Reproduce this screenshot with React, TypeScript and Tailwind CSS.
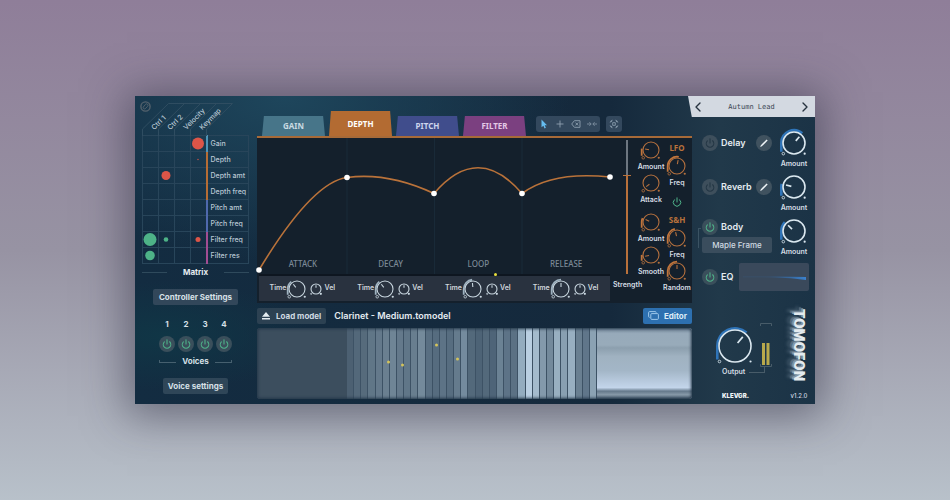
import React, { useState } from "react";
import { ChevronLeft, ChevronRight, Power } from "lucide-react";

type Tone = "light" | "orange" | "blue";

const TABS = [
  { name: "GAIN", color: "h-5 bg-[#477589] text-[#c9dbe2]" },
  { name: "DEPTH", color: "h-[25px] bg-[#b36b32] text-white" },
  { name: "PITCH", color: "h-5 bg-[#404d8c] text-[#cdd5ee]" },
  { name: "FILTER", color: "h-5 bg-[#7b4080] text-[#e3c9e6]" },
];

const SOURCES = ["Ctrl 1", "Ctrl 2", "Velocity", "Keymap"];

// dot radius for each source, negative amounts are red
const TARGETS = [
  { name: "Gain", edge: "border-l-[#4d94b8]", amounts: [0, 0, 0, -6] },
  { name: "Depth", edge: "border-l-[#b56d35]", amounts: [0, 0, 0, -0.7] },
  { name: "Depth amt", edge: "border-l-[#b56d35]", amounts: [0, -4.5, 0, 0] },
  { name: "Depth freq", edge: "border-l-[#b56d35]", amounts: [0, 0, 0, 0] },
  { name: "Pitch amt", edge: "border-l-[#4f69ad]", amounts: [0, 0, 0, 0] },
  { name: "Pitch freq", edge: "border-l-[#4f69ad]", amounts: [0, 0, 0, 0] },
  { name: "Filter freq", edge: "border-l-[#a14d93]", amounts: [6.5, 2.3, 0, -2.5] },
  { name: "Filter res", edge: "border-l-[#a14d93]", amounts: [4.8, 0, 0, 0] },
];

const STAGES = [
  { name: "ATTACK", time: 0.36 },
  { name: "DECAY", time: 0.36 },
  { name: "LOOP", time: 0.48 },
  { name: "RELEASE", time: 0.5 },
];

const WAVES = [
  "#4c6072", "#53687a", "#566b7c", "#607687", "#64798b", "#6a7f90", "#6f8596", "#64798b", "#607688",
  "#687e8f", "#748a9b", "#596f82", "#566c7f", "#5d7386", "#576d80", "#657b8d", "#748b9e", "#53697b",
  "#4d6376", "#53697b", "#4e6478", "#6b8294", "#5d7387", "#5b7184", "#93acbf", "#b9cfe2", "#a4bbcd",
  "#8399ab", "#73899b", "#98afc0", "#889fb1", "#98afc1", "#697f91", "#60768a", "#8ba2b3",
];

const TONES = {
  light: { ring: "#c8d6df", arc: "#9fb3c1" },
  orange: { ring: "#b4703e", arc: "#c0753c" },
  blue: { ring: "#dbe8f0", arc: "#2f74b8" },
};

function Knob({ name, r, start, tone }: { name: string; r: number; start: number; tone: Tone }) {
  const [value, setValue] = useState(start);
  const half = r + (r > 8 ? 4 : 3);
  const out = r + (r > 8 ? 1.7 : 1.3);
  const angle = ((value * 270 - 135) * Math.PI) / 180;
  const sin = Math.sin(angle);
  const cos = Math.cos(angle);
  const dot = r * 0.97;
  const { ring, arc } = TONES[tone];

  return (
    <span className="relative block shrink-0">
      <svg width={half * 2} height={half * 2} viewBox={`${-half} ${-half} ${half * 2} ${half * 2}`} fill="none">
        {r > 5 && value > 0.1 && (
          <path
            d={`M${-out} ${dot - 2} V0 A${out} ${out} 0 0 1 ${out * sin} ${-out * cos}`}
            stroke={arc}
            strokeWidth={r > 8 ? 2.6 : 1.8}
          />
        )}
        <circle r={r} stroke={ring} strokeWidth={r > 8 ? 1.6 : 1.1} />
        <path
          d={`M${r * 0.25 * sin} ${-r * 0.25 * cos} L${r * 0.75 * sin} ${-r * 0.75 * cos}`}
          stroke={ring}
          strokeWidth={r > 8 ? 1.7 : 1.1}
        />
        <circle cx={-dot} cy={dot} r={r > 5 ? 1.3 : 0.6} stroke={ring} strokeWidth="0.8" />
        <circle cx={dot} cy={dot} r="1.1" fill={ring} />
      </svg>
      <input
        type="range"
        aria-label={name}
        min={0}
        max={1}
        step={0.01}
        value={value}
        onChange={(e) => setValue(Number(e.target.value))}
        className="absolute inset-0 h-full w-full cursor-pointer opacity-0"
      />
    </span>
  );
}

function LabelKnob({ name, label, r, start, tone }: { name: string; label: string; r: number; start: number; tone: Tone }) {
  return (
    <div className="flex flex-col items-center gap-px">
      <Knob name={name} r={r} start={start} tone={tone} />
      <span className="text-[7px] leading-[10px] font-semibold text-[#d5dde4]">{label}</span>
    </div>
  );
}

function PowerButton({ name, on }: { name: string; on: boolean }) {
  const [active, setActive] = useState(on);

  return (
    <button
      aria-label={name}
      aria-pressed={active}
      onClick={() => setActive(!active)}
      className={
        active
          ? "flex size-4 shrink-0 items-center justify-center rounded-full bg-[#3a4f5b] text-[#4fb38a]"
          : "flex size-4 shrink-0 items-center justify-center rounded-full bg-[#3e4f5c] text-[#233644]"
      }
    >
      <Power size={10} strokeWidth={2.6} />
    </button>
  );
}

function Matrix() {
  return (
    <div className="relative ml-[7px] w-[107px]">
      <svg className="absolute top-0 left-0" width="107" height="40" viewBox="0 0 107 40" fill="none" stroke="#2f4d61" strokeWidth="1">
        {[0.5, 16.5, 32.5, 48.5, 64.5].map((x) => (
          <path key={x} d={`M${x} 40 V33 L${x + 26} 7.5`} />
        ))}
        <path d="M26.5 7.5 H90.5" />
      </svg>
      <svg className="absolute top-[5px] -left-[2px]" width="11" height="11" viewBox="0 0 11 11" fill="none" stroke="#53616c">
        <circle cx="5.5" cy="5.5" r="4.6" strokeWidth="1.4" />
        <path d="M3.2 6.2 a1.4 1.4 0 0 0 2 1.6 L7.6 5.3 a1.4 1.4 0 0 0 -2 -2 Z" strokeWidth="1" />
      </svg>
      <table className="w-full table-fixed border-collapse">
        <thead>
          <tr className="h-[39px]">
            {SOURCES.map((source) => (
              <th key={source} className="w-4 p-0 align-bottom">
                <div className="relative h-[39px]">
                  <span className="absolute bottom-1 left-3 origin-bottom-left -rotate-45 text-[7px] leading-[7px] font-medium whitespace-nowrap text-[#b9c7d3]">
                    {source}
                  </span>
                </div>
              </th>
            ))}
            <td className="p-0" />
          </tr>
        </thead>
        <tbody>
          {TARGETS.map((target) => (
            <tr key={target.name} className="h-4">
              {target.amounts.map((amount, i) => (
                <td key={i} className="h-4 border border-[#28455a] p-0">
                  {amount !== 0 && (
                    <svg className="-m-px block overflow-visible" width="16" height="15" viewBox="-8 -7.5 16 15">
                      <circle r={Math.abs(amount)} fill={amount > 0 ? "#4db287" : "#dc5548"} />
                    </svg>
                  )}
                </td>
              ))}
              <th
                className={`border border-l-2 border-[#28455a] p-0 pl-[3px] text-left text-[7px] leading-[8px] font-medium whitespace-nowrap text-[#b9c7d3] ${target.edge}`}
              >
                {target.name}
              </th>
            </tr>
          ))}
        </tbody>
      </table>
      <div className="mt-[3px] flex items-center gap-4">
        <span className="h-px flex-1 bg-[#2f4a5c]" />
        <h2 className="text-[8px] leading-[10px] font-bold text-[#e4ebf0]">Matrix</h2>
        <span className="h-px flex-1 bg-[#2f4a5c]" />
      </div>
    </div>
  );
}

function LeftColumn() {
  return (
    <aside className="flex flex-col items-stretch pr-px">
      <Matrix />
      <button className="mx-auto mt-3 h-4 rounded-[2px] bg-[#32475a] px-[6px] text-[8px] font-bold whitespace-nowrap text-[#d7e0e7]">
        Controller Settings
      </button>
      <div className="mx-auto mt-[14px] grid grid-cols-4 gap-x-[3px] gap-y-[7px]">
        {[1, 2, 3, 4].map((n) => (
          <span key={n} className="text-center text-[8px] leading-[10px] font-bold text-[#d7e0e7]">
            {n}
          </span>
        ))}
        {[1, 2, 3, 4].map((n) => (
          <PowerButton key={n} name={`Voice ${n}`} on />
        ))}
      </div>
      <div className="mx-auto mt-1 flex w-[73px] items-center gap-[6px]">
        <span className="h-[3px] flex-1 border-b border-l border-[#46606f]" />
        <h2 className="text-[8px] leading-[10px] font-bold text-[#d7e0e7]">Voices</h2>
        <span className="h-[3px] flex-1 border-r border-b border-[#46606f]" />
      </div>
      <button className="mx-auto mt-3 h-4 rounded-[2px] bg-[#2f4658] px-[5px] text-[8px] font-bold whitespace-nowrap text-[#d7e0e7]">
        Voice settings
      </button>
    </aside>
  );
}

function TabBar() {
  const toolClass = "flex h-4 flex-1 items-center justify-center";

  return (
    <div className="flex h-10 items-end pl-[5px]">
      <div className="flex items-end gap-1" role="tablist">
        {TABS.map((tab) => (
          <button
            key={tab.name}
            role="tab"
            aria-selected={tab.name === "DEPTH"}
            className={`w-[63px] [clip-path:polygon(3%_0,97%_0,100%_100%,0_100%)] font-['Noto_Sans',sans-serif] text-[8px] font-bold ${tab.color}`}
          >
            {tab.name}
          </button>
        ))}
      </div>
      <div className="mb-1 ml-[10px] flex w-16 rounded-[3px] bg-[#33485d]">
        <button aria-label="Select" className={toolClass}>
          <svg width="8" height="10" viewBox="0 0 8 10">
            <path d="M1.5 0.5 L7 6.2 H4.7 L5.9 8.8 L4.6 9.4 L3.4 6.8 L1.5 8.3 Z" fill="#66bdf0" />
          </svg>
        </button>
        <button aria-label="Add" className={toolClass}>
          <svg width="8" height="8" viewBox="0 0 8 8" stroke="#8fa0b0" strokeWidth="0.9">
            <path d="M4 0.5 V7.5 M0.5 4 H7.5" />
          </svg>
        </button>
        <button aria-label="Delete" className={toolClass}>
          <svg width="10" height="8" viewBox="0 0 10 8" fill="none" stroke="#8fa0b0" strokeWidth="0.9">
            <path d="M3.4 0.7 H9 V7.3 H3.4 L0.7 4 Z M4.5 2.6 L7.2 5.4 M7.2 2.6 L4.5 5.4" />
          </svg>
        </button>
        <button aria-label="Split" className={toolClass}>
          <svg width="10" height="8" viewBox="0 0 10 8" fill="none" stroke="#7f91a2" strokeWidth="0.9">
            <path d="M0 4 H4 M6 4 H10 M2.4 2.2 L4.2 4 L2.4 5.8 M7.6 2.2 L5.8 4 L7.6 5.8" />
          </svg>
        </button>
      </div>
      <button aria-label="Fit view" className="mb-1 ml-[6px] flex size-4 items-center justify-center rounded-[3px] bg-[#33485d]">
        <svg width="10" height="10" viewBox="0 0 10 10" fill="none" stroke="#8497a8" strokeWidth="0.9">
          <circle cx="5" cy="5" r="1.5" />
          <path d="M1.2 3.6 Q1.4 1.4 3.6 1.2 M6.4 1.2 Q8.6 1.4 8.8 3.6 M8.8 6.4 Q8.6 8.6 6.4 8.8 M3.6 8.8 Q1.4 8.6 1.2 6.4" />
          <path d="M2 2 L3.4 3.4 M8 2 L6.6 3.4 M8 8 L6.6 6.6 M2 8 L3.4 6.6" />
        </svg>
      </button>
    </div>
  );
}

function Envelope() {
  const points = [
    [2, 132],
    [90, 39.5],
    [177, 55.5],
    [265, 55.5],
    [353, 39],
  ];

  return (
    <div className="flex min-w-0 flex-1 flex-col">
      <div className="relative">
        <svg className="block w-full overflow-visible" viewBox="0 0 353 136" fill="none">
          <path d="M90 0 V136 M177.5 0 V136 M265 0 V136" stroke="#192a38" />
          <path
            d="M2 132 Q55 44 90 39.5 Q131 34 177 55.5 Q221 4 265 55.5 Q295 33 353 39"
            stroke="#b9723a"
            strokeWidth="1.6"
          />
          {points.map(([x, y]) => (
            <circle key={x} cx={x} cy={y} r="2.8" fill="#fff" />
          ))}
        </svg>
        <div className="absolute inset-x-0 bottom-[5px] grid grid-cols-4 pl-[2px] text-center font-['Noto_Sans',sans-serif] text-[8px] leading-[10px] font-medium text-[#7b8996]">
          {STAGES.map((stage) => (
            <span key={stage.name}>{stage.name}</span>
          ))}
        </div>
        <span className="absolute bottom-[-2px] left-[67%] size-[3px] rounded-full bg-[#e8de3c]" />
      </div>
      <div className="ml-[2px] grid h-[27px] grid-cols-4 border-t-2 border-[#0e1620] bg-[#29323f]">
        {STAGES.map((stage) => (
          <div key={stage.name} className="flex items-center justify-center pr-px text-[7px] font-semibold text-[#cfd6dc]">
            <span>Time</span>
            <Knob name={`${stage.name} time`} r={8} start={stage.time} tone="light" />
            <Knob name={`${stage.name} velocity`} r={5} start={0.5} tone="light" />
            <span>Vel</span>
          </div>
        ))}
      </div>
    </div>
  );
}

function Modulators() {
  const [strength, setStrength] = useState(73);

  return (
    <div className="flex w-[82px] shrink-0 pr-[2px]">
      <div className="flex w-[28px] flex-col items-end">
        <div className="relative mt-[2px] mr-[7px] h-[134px] w-2">
          <div className="mx-auto flex h-full w-[2px] flex-col bg-[#6d7680]">
            <span className="mt-auto bg-[#b9713b]" style={{ height: `${strength}%` }} />
          </div>
          <span className="absolute inset-x-0 h-px bg-[#b9713b]" style={{ bottom: `${strength}%` }} />
          <input
            id="strength"
            type="range"
            value={strength}
            onChange={(e) => setStrength(Number(e.target.value))}
            className="absolute inset-0 h-full w-full opacity-0 [writing-mode:vertical-lr]"
          />
        </div>
        <label htmlFor="strength" className="mt-[6px] w-[25px] text-[7px] leading-[10px] font-semibold text-[#d5dde4]">
          Strength
        </label>
      </div>
      <div className="flex w-[26px] flex-col items-center gap-[6px] pt-px">
        <div className="flex flex-col">
          <LabelKnob name="LFO amount" label="Amount" r={8} start={0.2} tone="orange" />
          <LabelKnob name="LFO attack" label="Attack" r={8} start={0.03} tone="orange" />
        </div>
        <div className="flex flex-col">
          <LabelKnob name="S&H amount" label="Amount" r={8} start={0.26} tone="orange" />
          <LabelKnob name="S&H smooth" label="Smooth" r={8} start={0.12} tone="orange" />
        </div>
      </div>
      <div className="flex w-[26px] flex-col items-center pt-[5px] text-[#b9713b]">
        <h3 className="font-['Noto_Sans',sans-serif] text-[8px] leading-[10px] font-bold">LFO</h3>
        <div className="mt-[2px]">
          <LabelKnob name="LFO freq" label="Freq" r={8} start={0.54} tone="orange" />
        </div>
        <button aria-label="Sync" className="mt-[6px] mb-[5px] flex h-4 items-center text-[#4fb38a]">
          <Power size={10} strokeWidth={2.4} />
        </button>
        <h3 className="font-['Noto_Sans',sans-serif] text-[8px] leading-[10px] font-bold">S&amp;H</h3>
        <div className="mt-[2px] flex flex-col">
          <LabelKnob name="S&H freq" label="Freq" r={8} start={0.45} tone="orange" />
          <LabelKnob name="S&H random" label="Random" r={8} start={0.5} tone="orange" />
        </div>
      </div>
    </div>
  );
}

function WaveStrip() {
  return (
    <div className="relative flex h-[71px] overflow-hidden rounded-[3px] bg-[#3c4e5e]">
      <div className="w-[90px] shrink-0" />
      <div className="flex min-w-0 flex-1">
        {WAVES.map((color, i) => (
          <span key={i} className="flex-1 border-r border-[#3d5265]" style={{ backgroundColor: color }} />
        ))}
      </div>
      <div className="w-[95px] shrink-0 bg-[linear-gradient(#73879a_0%,#97aaba_8%,#98abba_24%,#8c9fae_28%,#a0b2c1_40%,#a3b6c7_60%,#b9cbdf_76%,#c3d5ea_84%,#65798b_89%,#8799a8_94%,#4c6072_100%)]" />
      <div className="absolute inset-0 rounded-[3px] shadow-[inset_0_0_3px_1px_#24384a]" />
      <svg className="absolute inset-0 h-full w-full" viewBox="0 0 434 71" fill="#d3c35c">
        <circle cx="131" cy="34" r="1.5" />
        <circle cx="145" cy="37" r="1.5" />
        <circle cx="179" cy="17" r="1.5" />
        <circle cx="200" cy="31" r="1.5" />
      </svg>
    </div>
  );
}

function Editor() {
  return (
    <main className="min-w-0 pb-[5px]">
      <TabBar />
      <section className="flex h-[167px] border-t-2 border-[#a76a38] bg-[#14202c]">
        <Envelope />
        <Modulators />
      </section>
      <div className="flex h-[25px] items-center gap-2">
        <button className="flex h-4 items-center gap-[6px] rounded-[2px] bg-[#2c4152] px-[5px] text-[8px] font-bold whitespace-nowrap text-[#d0dae1]">
          <svg width="8" height="8" viewBox="0 0 8 8" fill="#e4ecf1">
            <path d="M4 0 L8 4.8 H0 Z M0 6 H8 V7.6 H0 Z" />
          </svg>
          Load model
        </button>
        <h1 className="text-[9px] leading-[12px] font-semibold whitespace-nowrap text-[#e4ebf0]">Clarinet - Medium.tomodel</h1>
        <button className="ml-auto flex h-4 items-center gap-[5px] rounded-[2px] bg-[#2d70b0] px-[5px] text-[8px] font-bold text-[#dcebf7]">
          <svg width="11" height="9" viewBox="0 0 11 9" fill="none" stroke="#a9d0f0" strokeWidth="0.9">
            <rect x="2.8" y="2.6" width="7.6" height="5.8" rx="1" />
            <path d="M1.6 6.4 A1 1 0 0 1 0.6 5.4 V1.6 A1 1 0 0 1 1.6 0.6 H7.2 A1 1 0 0 1 8.2 1.6" />
          </svg>
          Editor
        </button>
      </div>
      <WaveStrip />
    </main>
  );
}

function EffectRow({ name, amount }: { name: string; amount: number }) {
  return (
    <div className="flex pr-[6px]">
      <div className="flex h-[30px] flex-1 items-center gap-[3px]">
        <PowerButton name={`${name} power`} on={false} />
        <h2 className="text-[9px] leading-[12px] font-semibold text-[#e4ebf0]">{name}</h2>
        <button
          aria-label={`Edit ${name}`}
          className="ml-auto flex size-4 items-center justify-center rounded-full bg-[#40525f]"
        >
          <svg width="10" height="10" viewBox="0 0 10 10" fill="#eef3f6">
            <path d="M1.2 8.9 L1.8 7.2 L7.6 1.4 L8.7 2.5 L2.9 8.3 Z" />
          </svg>
        </button>
      </div>
      <div className="ml-[7px]">
        <LabelKnob name={`${name} amount`} label="Amount" r={11} start={amount} tone="blue" />
      </div>
    </div>
  );
}

function RightColumn() {
  return (
    <aside className="flex flex-col">
      <header className="-ml-1 flex h-[21px] items-center justify-between bg-[#d3d9e1] px-[2px] text-[#26323f] [clip-path:polygon(0_0,100%_0,100%_100%,3%_100%)]">
        <button aria-label="Previous preset">
          <ChevronLeft size={16} strokeWidth={2} />
        </button>
        <span className="font-['DejaVu_Sans_Mono',monospace] text-[7px] leading-[10px] text-[#3a4653]">Autumn Lead</span>
        <button aria-label="Next preset">
          <ChevronRight size={16} strokeWidth={2} />
        </button>
      </header>
      <div className="mt-[11px] flex flex-col gap-[3px] pl-[10px]">
        <EffectRow name="Delay" amount={0.65} />
        <EffectRow name="Reverb" amount={0.22} />
        <div className="flex pr-[6px]">
          <div className="relative flex-1 pt-[3px]">
            <span className="absolute top-3 -left-1 h-5 w-[3px] border-t border-l border-[#3b5363]" />
            <div className="flex items-center gap-[3px]">
              <PowerButton name="Body power" on />
              <h2 className="text-[9px] leading-[12px] font-semibold text-[#e4ebf0]">Body</h2>
            </div>
            <button className="mt-[2px] block h-4 w-[70px] rounded-[2px] bg-[#3a4d5d] text-[8px] font-medium text-[#d0dae1]">
              Maple Frame
            </button>
          </div>
          <LabelKnob name="Body amount" label="Amount" r={11} start={0.33} tone="blue" />
        </div>
      </div>
      <div className="mt-[6px] flex items-center gap-[3px] pr-[6px] pl-[10px]">
        <PowerButton name="EQ power" on />
        <h2 className="flex-1 text-[9px] leading-[12px] font-semibold text-[#e4ebf0]">EQ</h2>
        <svg className="rounded-[2px] bg-[#3a495b]" width="70" height="28" viewBox="0 0 70 28">
          <defs>
            <linearGradient id="eq">
              <stop offset="0.4" stopColor="#2e6db0" stopOpacity="0.2" />
              <stop offset="1" stopColor="#3b82cf" />
            </linearGradient>
          </defs>
          <path d="M4 13.6 L36 13.4 L67 14 V17 Q52 14.8 36 14.4 L4 14.2 Z" fill="url(#eq)" />
        </svg>
      </div>
      <div className="mt-[18px] flex flex-1 pr-[6px] pl-[23px]">
        <div className="flex flex-1 flex-col">
          <div className="mt-4 flex h-[42px] items-center gap-[5px]">
            <Knob name="Output" r={16} start={0.65} tone="blue" />
            <svg className="self-end" width="12" height="44" viewBox="0 0 12 44" fill="none" stroke="#485c69">
              <path d="M0.5 3 V0.5 H11.5 V3 M0.5 41 V43.5 H11.5 V41" />
              <path d="M3.5 20 V42 M8 20 V42" stroke="#b8a94c" strokeWidth="3" />
            </svg>
          </div>
          <div className="flex items-start gap-1 pl-[7px]">
            <span className="text-[7px] leading-[10px] font-semibold text-[#d5dde4]">Output</span>
            <span className="h-[6px] w-4 border-r border-b border-[#485c69]" />
          </div>
          <span className="mt-auto mb-[3px] pl-[7px] text-[6px] leading-[10px] font-black text-[#f0f4f7]">KLEVGR.</span>
        </div>
        <div className="flex w-5 flex-col items-center">
          <span className="font-['Roboto',sans-serif] text-[15px] leading-[18px] font-black text-[#e3ebf0] [text-shadow:-1px_2px_0_#8294a2,-2px_4px_1px_#5d7283,-3px_7px_3px_#3e5567] [writing-mode:vertical-rl]">
            TOMOFON
          </span>
          <span className="mt-auto mb-[3px] text-[6px] leading-[10px] font-medium text-[#d5dde4]">v1.2.0</span>
        </div>
      </div>
    </aside>
  );
}

export default function App() {
  return (
    <div className="flex min-h-screen items-center bg-linear-to-b from-[#8f7e99] via-[#9793a3] to-[#b8c1ca] px-[135px] font-['Inter',sans-serif]">
      <div className="grid w-full grid-cols-[122px_1fr_123px] bg-[#142c3f] bg-[radial-gradient(ellipse_at_22%_0%,#1e465c_0%,transparent_38%),radial-gradient(ellipse_at_4%_78%,#103646_0%,transparent_16%),linear-gradient(90deg,#132c41_0%,#15293c_70%,#21394a_86%,#1b3346_100%)] shadow-[0_4px_40px_8px_rgba(40,40,60,0.5)]">
        <LeftColumn />
        <Editor />
        <RightColumn />
      </div>
    </div>
  );
}
